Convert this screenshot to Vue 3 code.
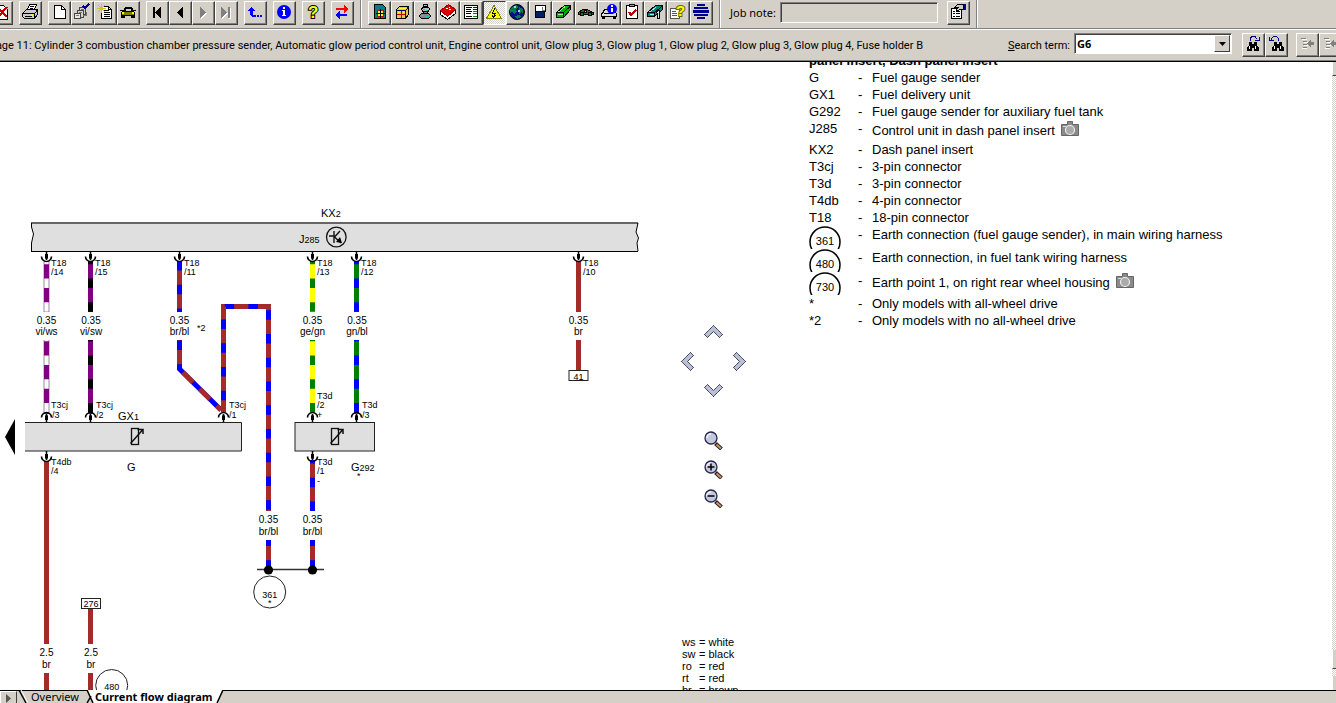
<script setup>
import { ref, h } from 'vue'

const K = '#000'
const icons = {
  close: [['#fff', K, 'M2 1H10L14 5V15H2Z'], ['none', '#c00000', 'M5 4L14 13M14 3L5 13', 2]],
  print: [['#fff', K, 'M5.5 5.5L7.5 .5H14.5L12.5 5.5Z'], ['none', K, 'M8 2.5H12M7.5 4.5H11'], ['#c8c8c8', K, 'M.5 9.5L4.5 5.5H15.5V10.5L12.5 14.5H2.5L.5 12.5Z'], ['none', K, 'M.5 9.5H12.5L15.5 6M12.5 9.5V14M2.5 12.5H10'], ['#ff0', 'none', 'M9 10H11V12H9Z']],
  page: [['#fff', K, 'M3.5 1.5H10.5L14.5 5.5V14.5H3.5Z'], ['none', K, 'M10.5 1.5V5.5H14.5']],
  pages: [['#d4d0c8', '#444', 'M5.5 3.5H11.5V10.5H5.5Z'], ['#d4d0c8', '#444', 'M3.5 6.5H9.5V13.5H3.5Z'], ['#e8e6e0', '#444', 'M.5 9.5H6.5V14.5H.5Z'], ['none', '#777', 'M7 5.5H10M5 8.5H8M2 11.5H5M9 11.5H12V8'], ['none', '#000090', 'M9 2L11 4L15 0', 2]],
  report: [['#fff', K, 'M5.5 2.5H11.5L14.5 5.5V14.5H4.5V5'], ['none', K, 'M11.5 2.5V5.5H14.5M7 6.5H12M7 8.5H13M7 10.5H13M7 12.5H13'], ['none', '#d0c800', 'M4.5 0V9M0 4.5H9M1 1L8 8M8 1L1 8']],
  car: [['#808000', K, 'M3.5 7.5L5.5 3.5H11.5L13.5 7.5L14.5 8.5V11.5H1.5V8.5Z'], ['#d4d0c8', K, 'M5 7L6 4.5H11L12 7Z'], [K, 'none', 'M1 11H5V14H1ZM11 11H15V14H11ZM0 6H3V7H0ZM13 6H16V7H13Z'], ['#ff0', 'none', 'M2 8H4V10H2ZM12 8H14V10H12Z']],
  first: [[K, 'none', 'M4 3H6V14H4ZM6 8.5L12 3V14Z']],
  prev: [[K, 'none', 'M5 8.5L11 3V14Z']],
  next: [['#fff', 'none', 'M6 4L12 9.5L6 15Z'], ['#808080', 'none', 'M5 3L11 8.5L5 14Z']],
  last: [['#fff', 'none', 'M4 4L10 9.5L4 15ZM11 4H13V15H11Z'], ['#808080', 'none', 'M3 3L9 8.5L3 14ZM10 3H12V14H10Z']],
  back: [['#00f', 'none', 'M1 7L4 3L8 7H6V11H9V13H5L3 11V7ZM10 11H12V13H10ZM13 11H15V13H13Z']],
  info: [['#00f', 'none', 'M8 1A7 7 0 1 1 8 15A7 7 0 1 1 8 1Z'], ['#fff', 'none', 'M7 3H9V5H7ZM6 6H9V11H10V12H6V11H7V7H6Z']],
  help: [{ t: '?', x: 3, y: 14, f: '#ff0', s: K, z: 17 }],
  swap: [['#f00', 'none', 'M2 4H10V1L15 5L10 9V6H2Z'], ['#00f', 'none', 'M13 10H6V7L1 11L6 15V12H13Z']],
  manual: [['#008080', K, 'M3.5 .5H11.5L14.5 3.5V14.5H3.5Z'], ['#ff0', '#c00', 'M6.5 6.5H12.5V12.5H6.5Z'], ['none', K, 'M9.5 5V14M5 9.5H14']],
  cube: [['#e0c850', K, 'M2.5 5.5L5.5 2.5H14.5V10.5L11.5 14.5H2.5Z'], ['none', '#0000a0', 'M2.5 6.5H11.5V14M11.5 6.5L14.5 3'], ['none', '#c00000', 'M3 10.5H11M7.5 7V14'], ['none', '#ff0', 'M5 4.5H12M4 8.5H6M9 8.5H11']],
  engine: [['#bbb', K, 'M6.5 .5H10.5V2.5H6.5ZM4.5 4.5L6.5 3.5H11.5L12.5 4.5L11.5 7.5H5.5Z'], ['#888', K, 'M6.5 7.5H10.5V9.5H6.5ZM2.5 11.5L4.5 9.5H11.5L13.5 11.5V12.5L11.5 14.5H4.5L2.5 12.5Z'], ['none', '#0cc', 'M6 5.5H8M9 6.5H11M4 11.5H7M8 12.5H12']],
  book: [['#fff', K, 'M.5 7.5V10.5L7.5 15.5L15.5 9.5V6.5Z'], ['#e00000', '#a00000', 'M.5 6.5L8.5 .5L15.5 5.5L7.5 12.5Z'], ['none', '#fff', 'M6 4.5H8M9 3.5H10M9 5.5H11']],
  list: [['#fff', K, 'M1.5 1.5H14.5V14.5H1.5Z'], ['none', K, 'M3 3.5H9M3 5.5H8M3 7.5H9M3 9.5H8M3 12.5H9'], ['none', '#00f', 'M10 3.5H14M10 5.5H14'], ['none', '#f00', 'M10 7.5H14M10 9.5H14'], ['none', '#080', 'M10 12.5H14']],
  warn: [['#ff0', '#808000', 'M8 1.5L15.5 14.5H.5Z'], ['none', K, 'M9 4L6.5 9H9.5L7.5 13M6 11L7.5 13L10 11']],
  globe: [['#001080', K, 'M8 .5A7 7 0 1 1 8 15.5A7 7 0 1 1 8 .5Z'], ['#008040', 'none', 'M3 3L7 1L9 3L7 6L8 8L5 10L3 8L1 9V6ZM10 3L14 5V9L12 8L10 10ZM6 12L10 11L12 13L8 15Z'], ['#9fd8d8', 'none', 'M5 2H7V4H5ZM9 6H11V8H9Z']],
  panel: [['#fff', K, 'M3.5 1.5H13.5V7.5H3.5Z'], ['#002060', K, 'M3.5 7.5H12.5V13.5H3.5Z'], ['none', '#777', 'M10 3V6H13']],
  green: [['#00b000', K, 'M1.5 8.5L9.5 1.5H15.5V5.5L8.5 13.5H1.5Z'], ['none', '#8f8', 'M3 8.5L10 2.5M3 10.5H8'], ['none', K, 'M1.5 8.5H8.5L15.5 2M8.5 8.5V13.5']],
  turtle: [['#008020', K, 'M.5 8.5L4.5 5.5H9.5L12.5 7.5L15.5 8.5V10.5H.5Z'], ['#d4d0c8', K, 'M6.5 6.5H8.5V8.5H6.5Z'], ['#008020', K, 'M2.5 8.5H5.5V11.5H2.5ZM10.5 8.5H13.5V11.5H10.5Z']],
  carInfo: [['#ddd', K, 'M1.5 9.5L3.5 5.5H11.5L15.5 9.5V12.5H.5V9.5Z'], [K, 'none', 'M1 12H4V15H1ZM12 12H15V15H12ZM3 9H12V10H3Z'], ['#00f', 'none', 'M11 0A5 5 0 1 1 11 10A5 5 0 1 1 11 0Z'], ['#fff', 'none', 'M10 1H12V3H10ZM10 4H12V8H10Z']],
  check: [['#fff', K, 'M2.5 1.5H13.5V14.5H2.5Z'], ['#aaa', K, 'M5.5 .5H10.5V2.5H5.5Z'], ['none', '#c00000', 'M5 8L7 11L12 6', 2]],
  tool: [['#008080', K, 'M.5 8.5L8.5 1.5H15.5V5.5L7.5 12.5H.5Z'], ['none', '#8ff', 'M2 8.5L9 3M3 10.5H7'], ['none', K, 'M.5 8.5H7.5L15.5 2M7.5 8.5V12'], ['#ddd', K, 'M9.5 7.5L12.5 6.5V14.5H10.5V10.5Z']],
  docHelp: [['#fff', '#555', 'M.5 4.5H7.5L9.5 6.5V14.5H.5Z'], ['none', '#555', 'M2 7.5H6M2 9.5H7M2 11.5H7'], { t: '?', x: 6, y: 12, f: '#ff0', s: '#666600', z: 15 }],
  stripes: [['#000090', 'none', 'M4 0H12V2H4ZM1 3H15V5H1ZM0 6H16V9H0ZM1 10H15V12H1ZM4 13H12V15H4Z']],
  props: [['#fff', K, 'M1.5 4.5H11.5V14.5H1.5Z'], ['none', K, 'M3 7.5H5M6 7.5H10M3 9.5H5M6 9.5H10M3 12.5H5M6 12.5H10'], ['#ccc', K, 'M4.5 3.5L7.5 .5H13.5V5.5H9.5L7.5 7.5L6.5 5.5L8 3.5Z'], ['#000090', 'none', 'M14 0H16V6H14Z']],
  findNext: [[K, 'none', 'M4 6H7V8H9V6H12V9L14 12V15H9V12H7V15H2V12L4 9Z'], ['#fff', 'none', 'M4 10H5V13H4ZM10 10H11V13H10Z'], ['none', '#000090', 'M5 4.5V2.5L7 .5H10L12.5 3.5M10 4.5H14M14.5 1V5']],
  findPrev: [[K, 'none', 'M6 6H9V8H11V6H14V9L16 12V15H11V12H9V15H4V12L6 9Z'], ['#fff', 'none', 'M6 10H7V13H6ZM12 10H13V13H12Z'], ['none', '#000090', 'M10.5 4.5V2.5L8.5 .5H5.5L3 3.5M1.5 4.5H5.5M1.5 1V5']],
  indent: [['none', '#fff', 'M3 3.5H8M5 6.5H9M5 9.5H9M3 12.5H8'], ['none', '#808080', 'M2 2.5H7M4 5.5H8M4 8.5H8M4 11.5H8'], ['#808080', 'none', 'M8 7.5L12 4V6H15V9H12V11Z']]
}

const Icon = (p) =>
  h('svg', { class: 'ico', width: 16, height: 16, viewBox: '0 0 16 16', 'aria-hidden': 'true' },
    icons[p.name].map((s) => s.t
      ? h('text', { x: s.x, y: s.y, fill: s.f, stroke: s.s, 'stroke-width': 2, 'paint-order': 'stroke', 'font-size': s.z, 'font-weight': 700, 'font-family': 'Liberation Sans, sans-serif' }, s.t)
      : h('path', { fill: s[0], stroke: s[1], d: s[2], 'stroke-width': s[3] || 1, 'shape-rendering': s[2].includes('A') ? 'auto' : 'crispEdges' })))
Icon.props = ['name']

const groups = [
  [['close', 'Close']],
  [['print', 'Print']],
  [['page', 'New'], ['pages', 'Select jobs'], ['report', 'New report'], ['car', 'Vehicle']],
  [['first', 'First'], ['prev', 'Previous'], ['next', 'Next'], ['last', 'Last']],
  [['back', 'Back']],
  [['info', 'Information']],
  [['help', 'Help']],
  [['swap', 'Switch']]
]
const modules = [
  ['manual', 'Manual'], ['cube', 'Parts'], ['engine', 'Engine'], ['book', 'Handbook'], ['list', 'List'],
  ['warn', 'Wiring'], ['globe', 'Online'], ['panel', 'Panel'], ['green', 'Maintenance'], ['turtle', 'Body'],
  ['carInfo', 'Vehicle info'], ['check', 'Checklist'], ['tool', 'Tools'], ['docHelp', 'Document help'], ['stripes', 'Stripes']
]

const note = ref('')
const term = ref('G6')

const br = '#a52a2a', bl = '#0000ff', vi = '#800080', gn = '#008000'
const wires = [
  { d: 'M46.5 261V312', a: vi, b: '#fff', o: -3.3, edge: true },
  { d: 'M46.5 340V414', a: vi, b: '#fff', o: -1.3, edge: true },
  { d: 'M90.5 261V312', a: vi, b: K, o: -3.3 },
  { d: 'M90.5 340V414', a: vi, b: K, o: -1.3 },
  { d: 'M179.5 261V312', a: br, b: bl, o: -9.6 },
  { d: 'M179.5 340V369L221 410', a: br, b: bl, o: -10 },
  { d: 'M223.5 412V306.5H268.5V511', a: br, b: bl, o: 2.6 },
  { d: 'M268.5 540V568', a: br, b: bl, o: -6 },
  { d: 'M312.5 261V312', a: '#ffff00', b: gn, o: -3.3 },
  { d: 'M312.5 340V414', a: '#ffff00', b: gn, o: -1.3 },
  { d: 'M312.5 460V511', a: br, b: bl, o: -3.5 },
  { d: 'M312.5 540V568', a: br, b: bl, o: -6 },
  { d: 'M356.5 261V312', a: gn, b: bl, o: -3.3 },
  { d: 'M356.5 340V414', a: gn, b: bl, o: -1.3 },
  { d: 'M578.5 261V312', a: br, b: br, o: 0 },
  { d: 'M578.5 340V371', a: br, b: br, o: 0 },
  { d: 'M46.5 461V644', a: br, b: br, o: 0 },
  { d: 'M46.5 673V700', a: br, b: br, o: 0 },
  { d: 'M90.5 608V644', a: br, b: br, o: 0 },
  { d: 'M90.5 673V700', a: br, b: br, o: 0 }
]
const plugsDown = [[46.5, 251], [90.5, 251], [179.5, 251], [312.5, 251], [356.5, 251], [578.5, 251], [46.5, 451], [312.5, 451]]
const plugsUp = [[46.5, 422], [90.5, 422], [223.5, 422], [312.5, 422], [356.5, 422]]
const pins = [
  [51, 266, 'T18'], [51, 275, '/14'], [95, 266, 'T18'], [95, 275, '/15'], [184, 266, 'T18'], [184, 275, '/11'],
  [317, 266, 'T18'], [317, 275, '/13'], [361, 266, 'T18'], [361, 275, '/12'], [583, 266, 'T18'], [583, 275, '/10'],
  [51, 408, 'T3cj'], [52, 418, '/3'], [96, 408, 'T3cj'], [96, 418, '/2'], [229, 408, 'T3cj'], [229, 418, '/1'],
  [317, 399, 'T3d'], [317, 408, '/2'], [317, 418, '+'], [362, 408, 'T3d'], [362, 418, '/3'],
  [51, 465, 'T4db'], [51, 474, '/4'], [317, 465, 'T3d'], [317, 474, '/1'], [317, 484, '-'], [197, 331, '*2']
]
const gauges = [
  [46.5, 324, '0.35'], [46.5, 335, 'vi/ws'], [91, 324, '0.35'], [91, 335, 'vi/sw'], [179.5, 324, '0.35'], [179.5, 335, 'br/bl'],
  [312.5, 324, '0.35'], [312.5, 335, 'ge/gn'], [357, 324, '0.35'], [357, 335, 'gn/bl'], [578.5, 324, '0.35'], [578.5, 335, 'br'],
  [268.5, 523, '0.35'], [268.5, 535, 'br/bl'], [312.5, 523, '0.35'], [312.5, 535, 'br/bl'],
  [46.5, 656, '2.5'], [46.5, 668, 'br'], [91, 656, '2.5'], [91, 668, 'br']
]

const legend = [
  { k: 'G', t: 'Fuel gauge sender' },
  { k: 'GX1', t: 'Fuel delivery unit' },
  { k: 'G292', t: 'Fuel gauge sender for auxiliary fuel tank' },
  { k: 'J285', t: 'Control unit in dash panel insert', cam: true },
  { k: 'KX2', t: 'Dash panel insert' },
  { k: 'T3cj', t: '3-pin connector' },
  { k: 'T3d', t: '3-pin connector' },
  { k: 'T4db', t: '4-pin connector' },
  { k: 'T18', t: '18-pin connector' },
  { k: '361', ring: true, t: 'Earth connection (fuel gauge sender), in main wiring harness' },
  { k: '480', ring: true, t: 'Earth connection, in fuel tank wiring harness' },
  { k: '730', ring: true, t: 'Earth point 1, on right rear wheel housing', cam: true },
  { k: '*', t: 'Only models with all-wheel drive' },
  { k: '*2', t: 'Only models with no all-wheel drive' }
]
const colours = [['ws', 'white'], ['sw', 'black'], ['ro', 'red'], ['rt', 'red'], ['br', 'brown']]
const arrows = [
  ['up', 'Scroll up', 19, 13, 'M9.5 .5L18.5 9.5L15.5 12.5L9.5 6.5L3.5 12.5L.5 9.5Z'],
  ['left', 'Scroll left', 13, 19, 'M.5 9.5L9.5 .5L12.5 3.5L6.5 9.5L12.5 15.5L9.5 18.5Z'],
  ['right', 'Scroll right', 13, 19, 'M12.5 9.5L3.5 .5L.5 3.5L6.5 9.5L.5 15.5L3.5 18.5Z'],
  ['down', 'Scroll down', 19, 13, 'M9.5 12.5L18.5 3.5L15.5 .5L9.5 6.5L3.5 .5L.5 3.5Z']
]
const lenses = [['Zoom reset', ''], ['Zoom in', 'M3.5 7H10.5M7 3.5V10.5'], ['Zoom out', 'M3.5 7H10.5']]
</script>

<template>
  <div class="app">
    <header class="bar tools">
      <div class="band">
        <div v-for="(g, i) in groups" :key="i" class="group">
          <button v-for="b in g" :key="b[0]" type="button" class="tb" :aria-label="b[1]"><Icon :name="b[0]" /></button>
        </div>
      </div>
      <div class="band">
        <div class="group">
          <button v-for="b in modules" :key="b[0]" type="button" class="tb" :class="{ on: b[0] === 'warn' }" :aria-label="b[1]"><Icon :name="b[0]" /></button>
        </div>
      </div>
      <div class="band job">
        <label for="note">Job note:</label>
        <input id="note" v-model="note" type="text" />
        <button type="button" class="tb" aria-label="Properties"><Icon name="props" /></button>
      </div>
    </header>

    <div class="bar search">
      <div class="status"><span>Page 11: Cylinder 3 combustion chamber pressure sender, Automatic glow period control unit, Engine control unit, Glow plug 3, Glow plug 1, Glow plug 2, Glow plug 3, Glow plug 4, Fuse holder B</span></div>
      <label for="term"><u>S</u>earch term:</label>
      <div class="combo">
        <select id="term" v-model="term"><option>G6</option></select>
        <span class="drop"><svg width="7" height="4" viewBox="0 0 7 4"><path d="M0 0H7L3.5 4Z" /></svg></span>
      </div>
      <div class="group">
        <button type="button" class="tb" aria-label="Find next"><Icon name="findNext" /></button>
        <button type="button" class="tb" aria-label="Find previous"><Icon name="findPrev" /></button>
      </div>
      <div class="group tail">
        <button type="button" class="tb" aria-label="Previous hit"><Icon name="indent" /></button>
        <button type="button" class="tb" aria-label="Next hit"><Icon name="indent" /></button>
      </div>
    </div>

    <main class="sheet">
      <svg class="diagram" width="670" height="628" viewBox="0 62 670 628" role="img" aria-label="Current flow diagram">
        <g fill="none">
          <g v-for="w in wires" :key="w.d">
            <path v-if="w.edge" :d="w.d" stroke="#9a8a9e" stroke-width="6" />
            <path :d="w.d" :stroke="w.b" :stroke-width="w.edge ? 4 : 5" />
            <path :d="w.d" :stroke="w.a" stroke-width="5" :stroke-dasharray="w.a === w.b ? 'none' : '14.25 9.5'" :stroke-dashoffset="w.o" />
          </g>
        </g>
        <path d="M31.5 223.5H638.5L636.5 232L638.5 238L636.5 243L637.5 251.5H31.5V243L33.5 235L31.5 228Z" fill="#dfdfdf" />
        <path d="M31 223H638" stroke="#666" stroke-width="2" />
        <path d="M31 251.5H638" stroke="#000" />
        <path d="M31.5 223V227L33.5 234L31.5 243V251M638 223L636 232L638.5 238L637 243L638 251" fill="none" stroke="#000" />
        <rect x="25" y="422.5" width="216.5" height="28.5" fill="#dfdfdf" />
        <path d="M25 422.5H241.5V451H25" fill="none" stroke="#222" />
        <rect x="295" y="422.5" width="79.5" height="28.5" fill="#dfdfdf" stroke="#222" />
        <path d="M5 437L15 419V455Z" />

        <circle cx="336.3" cy="237" r="9.8" fill="none" stroke="#111" stroke-width="1.3" />
        <path d="M334 231V243M329 236H334M340 231L334.5 237L341 243" fill="none" stroke="#111" stroke-width="1.4" />
        <path d="M342 243L336 242L340 237Z" />
        <g v-for="x in [131.5, 331.5]" :key="x" fill="none" stroke="#111">
          <rect :x="x" y="428.5" width="7" height="16" stroke-width="1.3" />
          <path :d="`M${x - 1} 443.5L${x + 11} 430M${x + 6} 429.5H${x + 11.5}V434`" stroke-width="1.5" />
        </g>

        <g v-for="p in plugsDown" :key="'d' + p" :transform="`translate(${p[0]} ${p[1]})`">
          <path d="M0 0V9" stroke="#000" stroke-width="1.5" /><path d="M-1.5 3H1.5L1.5 7L0 9L-1.5 7Z" />
          <path d="M-5 5.5A5 5 0 0 0 5 5.5" fill="none" stroke="#000" stroke-width="1.6" />
        </g>
        <g v-for="p in plugsUp" :key="'u' + p" :transform="`translate(${p[0]} ${p[1]}) scale(1 -1)`">
          <path d="M0 0V8" stroke="#000" stroke-width="1.5" /><path d="M-1.5 2H1.5L1.5 6L0 8L-1.5 6Z" />
          <path d="M-5 4.5A5 5 0 0 0 5 4.5" fill="none" stroke="#000" stroke-width="1.6" />
        </g>

        <path d="M257 569.5H324" stroke="#333" stroke-width="1.5" />
        <circle cx="268.5" cy="570" r="4.6" /><circle cx="312.5" cy="570" r="4.6" />
        <g fill="#fff" stroke="#222">
          <circle cx="269.7" cy="592" r="16" /><circle cx="111.7" cy="685.5" r="16" />
          <rect x="569" y="370.5" width="19" height="10" /><rect x="81.5" y="598.5" width="19" height="10" />
        </g>
        <g font-size="9">
          <text v-for="p in pins" :key="p.join()" :x="p[0]" :y="p[1]">{{ p[2] }}</text>
          <g text-anchor="middle">
            <text x="578.5" y="380">41</text><text x="91" y="607">276</text>
            <text x="269.7" y="598">361</text><text x="269.7" y="606">*</text><text x="111.7" y="690">480</text>
          </g>
          <text x="357" y="479">*</text>
        </g>
        <g font-size="10" text-anchor="middle">
          <text v-for="g in gauges" :key="g.join()" :x="g[0]" :y="g[1]">{{ g[2] }}</text>
        </g>
        <g font-size="11">
          <text x="321" y="217">KX<tspan font-size="9">2</tspan></text>
          <text x="299" y="243">J<tspan font-size="9">285</tspan></text>
          <text x="118" y="420">GX<tspan font-size="9">1</tspan></text>
          <text x="127" y="471">G</text>
          <text x="351" y="471">G<tspan font-size="9">292</tspan></text>
        </g>
      </svg>

      <aside class="middle">
        <nav class="pan">
          <button v-for="a in arrows" :key="a[0]" type="button" class="bare" :class="a[0]" :aria-label="a[1]">
            <svg :width="a[2]" :height="a[3]"><path :d="a[4]" fill="#b9bfd4" stroke="#23233f" stroke-dasharray="1 1" /><path :d="a[4]" fill="none" stroke="#23233f" stroke-opacity=".55" /></svg>
          </button>
        </nav>
        <div class="lenses">
          <button v-for="l in lenses" :key="l[0]" type="button" class="bare" :aria-label="l[0]">
            <svg width="19" height="19">
              <path d="M11.5 12.5L17.5 18" stroke="#2b2030" stroke-width="4" /><path d="M12.5 13.5L17 17.5" stroke="#c9935a" stroke-width="2" />
              <circle cx="7" cy="7" r="6" fill="#c3c8dc" stroke="#26264e" stroke-width="1.3" /><path d="M3 7A4 4 0 0 1 7 3" fill="none" stroke="#f2f4ff" stroke-width="1.5" />
              <path :d="l[1]" stroke="#000" stroke-width="1.5" />
            </svg>
          </button>
        </div>
        <dl class="key">
          <template v-for="c in colours" :key="c[0]"><dt>{{ c[0] }}</dt><dd>= {{ c[1] }}</dd></template>
        </dl>
      </aside>

      <section class="legend">
        <h2>panel insert, Dash panel insert</h2>
        <table>
          <tbody>
            <tr v-for="r in legend" :key="r.k" :class="{ photo: r.cam, ringed: r.ring }">
              <td class="code">
                <svg v-if="r.ring" width="32" height="23"><circle cx="16" cy="16" r="15" fill="none" stroke="#000" stroke-width="1.5" /><text x="16" y="19" font-size="11" text-anchor="middle">{{ r.k }}</text></svg>
                <template v-else>{{ r.k }}</template>
              </td>
              <td class="dash">-</td>
              <td>
                <div class="desc">{{ r.t }}
                  <svg v-if="r.cam" class="cam" width="18" height="16"><path d="M.5 3.5H6.5V.5H11.5V3.5H17.5V14.5H.5Z" fill="#8a8a8a" stroke="#666" /><circle cx="9" cy="9" r="4.5" fill="#aaa" stroke="#eee" stroke-width="1.2" /><path d="M2 5.5H5" stroke="#ddd" /></svg>
                </div>
              </td>
            </tr>
          </tbody>
        </table>
      </section>

      <div class="scroll"><i class="cap"></i><i class="gap"></i><i class="thumb"></i><i class="gap low"></i><i class="end"></i></div>
    </main>

    <footer class="tabs">
      <button type="button" class="step" aria-label="Scroll tabs"><svg width="5" height="9"><path d="M0 0L5 4.5L0 9Z" fill="#555" /></svg></button>
      <svg width="14" height="13"><path d="M2 0L9 13" stroke="#000" stroke-width="1.5" /><path d="M4 0L11 13" stroke="#fff" /></svg>
      <button type="button" class="tab">Overview</button>
      <svg width="15" height="13"><path d="M8 0H15V13H14Z" fill="#fff" /><path d="M8 0L14 13M12 6L8 13" stroke="#000" stroke-width="1.5" /></svg>
      <button type="button" class="tab active">Current flow diagram</button>
      <svg width="12" height="13"><path d="M0 0H10L4 13H0Z" fill="#fff" /><path d="M10 0L4 13" stroke="#000" stroke-width="1.5" /></svg>
      <span class="rest"></span>
    </footer>
  </div>
</template>

<style>
html, body { margin: 0; overflow: hidden; }
</style>

<style scoped>
.app { height: 100vh; display: flex; flex-direction: column; overflow: hidden; background: #fff; color: #000; font: 11px/14px "Noto Sans", "DejaVu Sans", sans-serif; }
button, input, select { font: inherit; color: inherit; margin: 0; border-radius: 0; }
.bar { display: flex; flex: none; background: #d4d0c8; box-sizing: border-box; }
.tools { height: 29px; border-bottom: 1px solid #808080; }
.band { display: flex; align-items: flex-start; gap: 6px; padding: 1px 6px 0 7px; border-right: 1px solid #808080; box-shadow: 1px 0 #fff; }
.band:first-child { padding-left: 0; margin-left: -10px; }
.group { display: flex; }
.tb { width: 23px; height: 24px; padding: 2px 0 0 2px; box-sizing: border-box; display: flex; align-items: flex-start; justify-content: flex-start; background: #d4d0c8; border: 1px solid; border-color: #fff #404040 #404040 #fff; box-shadow: inset -1px -1px #808080; }
.tb.on { border-color: #404040 #fff #fff #404040; box-shadow: none; background: repeating-conic-gradient(#fff 0 25%, #d4d0c8 0 50%) 0 0 / 2px 2px; }
.tb :deep(.ico) { display: block; flex: none; overflow: visible; }
.band.job { padding-left: 10px; }
.job label { width: 44px; padding-top: 5px; white-space: nowrap; }
.job input { width: 158px; height: 21px; margin: 1px 3px 0 0; padding: 0 3px; box-sizing: border-box; background: #d4d0c8; border: 1px solid; border-color: #808080 #fff #fff #808080; box-shadow: inset 1px 1px #404040; outline: 0; }
.search { height: 33px; align-items: flex-start; border-top: 1px solid #fff; border-bottom: 1px solid #000; padding-top: 3px; box-shadow: inset 0 -1px #808080; }
.status { flex: 1; min-width: 0; overflow: hidden; white-space: nowrap; padding-top: 6px; font-family: Roboto, "Noto Sans", sans-serif; }
.status span { display: inline-block; margin-left: -11px; }
.search label { padding: 6px 4px 0 0; white-space: nowrap; font-family: Roboto, "Noto Sans", sans-serif; }
.combo { display: flex; position: relative; width: 158px; height: 21px; margin-right: 10px; }
.combo select { flex: 1; appearance: none; background: #fff; border: 1px solid; border-color: #808080 #fff #fff #808080; box-shadow: inset 1px 1px #404040; padding: 0 2px; font-weight: 700; outline: 0; }
.drop { position: absolute; right: 2px; top: 2px; width: 14px; height: 15px; display: flex; align-items: center; justify-content: center; background: #d4d0c8; border: 1px solid; border-color: #fff #404040 #404040 #fff; pointer-events: none; }
.tail { margin: 0 -6px 0 8px; }

.sheet { flex: 1; min-height: 0; display: flex; overflow: hidden; font-family: "Liberation Sans", Arial, sans-serif; }
.diagram { flex: none; display: block; }
.middle { flex: none; width: 139px; box-sizing: border-box; padding: 263px 0 0 11px; }
.pan { display: grid; width: 65px; grid-template-columns: 13px 1fr 13px; grid-template-rows: 27px 32px 13px; justify-items: center; }
.bare { border: 0; background: none; padding: 0; display: block; }
.bare svg { display: block; }
.up, .down { grid-column: 2; }
.up { grid-row: 1; }
.down { grid-row: 3; }
.left { grid-column: 1; grid-row: 2; }
.right { grid-column: 3; grid-row: 2; }
.up, .left, .right, .down { align-self: start; }
.lenses { display: flex; flex-direction: column; gap: 10px; width: 65px; align-items: center; padding-top: 34px; }
.key { display: grid; grid-template-columns: 17px 1fr; margin: 128px 0 0 1px; font-size: 11px; line-height: 12px; }
.key dt, .key dd { margin: 0; }
.legend { flex: 1; min-width: 0; font-size: 13px; line-height: 17px; }
.legend h2 { margin: -10px 0 0; font-size: 13px; line-height: 17px; }
.legend table { border-collapse: collapse; }
.legend td { padding: 0; height: 17px; vertical-align: top; white-space: nowrap; }
.code { width: 49px; }
.code svg { display: block; }
.dash { width: 14px; }
.desc { display: flex; gap: 6px; }
.legend .photo td { height: 21px; }
.photo .desc { line-height: 21px; }
.legend .ringed td { height: 23px; }
.cam { display: block; margin-top: 1px; }
.scroll { flex: none; width: 4px; display: flex; flex-direction: column; }
.scroll i { display: block; box-sizing: border-box; background: #d4d0c8; border-left: 1px solid #fff; }
.cap { height: 14px; border-bottom: 1px solid #404040; }
.scroll .gap { flex: 1; border: 0; background: repeating-conic-gradient(#fff 0 25%, #d4d0c8 0 50%) 0 0 / 2px 2px; }
.thumb { height: 19px; border-bottom: 1px solid #404040; }
.scroll .low { flex: none; height: 7px; }
.end { height: 14px; }

.tabs { flex: none; height: 13px; display: flex; background: #d4d0c8; overflow: hidden; box-shadow: inset 0 1px #000; }
.tabs > svg { display: block; flex: none; }
.step { width: 17px; height: 16px; padding: 0 0 2px; border: 1px solid; border-color: #fff #404040 #404040 #fff; background: #d4d0c8; margin-top: 1px; flex: none; }
.step svg { display: block; margin: auto; }
.tab { border: 0; padding: 0; background: none; height: 14px; white-space: nowrap; flex: none; line-height: 14px; }
.active { background: #fff; font-weight: 700; padding-left: 1px; }
.rest { flex: 1; }
</style>
